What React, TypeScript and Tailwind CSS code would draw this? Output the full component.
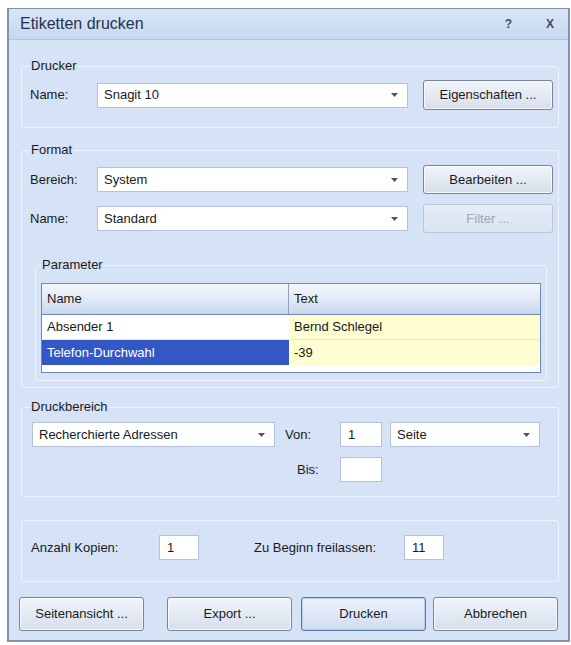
import type { ReactNode } from "react";

const ui = "font-['Liberation_Sans',Arial,sans-serif]";

// small grey dropdown caret used by the combo boxes
const Caret = () => (
  <svg width="7" height="4" viewBox="0 0 7 4" className="shrink-0">
    <path d="M0 0h7L3.5 4z" fill="#4b5565" />
  </svg>
);

const Combo = ({ value, className = "" }: { value: string; className?: string }) => (
  <div
    className={`flex h-[25px] items-center justify-between border border-[#b4c3db] bg-white pl-[6px] pr-[9px] text-[13px] text-[#1a1a1a] ${className}`}
  >
    <span>{value}</span>
    <Caret />
  </div>
);

const Field = ({ value = "", className = "" }: { value?: string; className?: string }) => (
  <div
    className={`flex h-[25px] items-center border border-[#b4c3db] bg-white pl-[7px] text-[13px] text-[#1a1a1a] ${className}`}
  >
    {value}
  </div>
);

type BtnProps = { children: ReactNode; className?: string; primary?: boolean; disabled?: boolean };

const Btn = ({ children, className = "", primary, disabled }: BtnProps) => {
  let look =
    "border-[#76859f] bg-gradient-to-b from-[#f2f5fa] via-[#e4eaf3] to-[#d6dfec] text-[#1a1a1a] shadow-[inset_0_0_0_1px_#f7f9fc]";
  if (primary)
    look =
      "border-[#5a78ad] bg-gradient-to-b from-[#eef3fb] via-[#dfe8f6] to-[#cfdcef] text-[#1a1a1a] shadow-[inset_0_0_0_1px_#b9cdea]";
  if (disabled)
    look = "border-[#b9c7dc] bg-gradient-to-b from-[#e6edf7] to-[#d9e3f1] text-[#9aa6b8]";
  return (
    <div
      className={`flex items-center justify-center rounded-[3px] border text-[13px] ${look} ${className}`}
    >
      {children}
    </div>
  );
};

const Group = ({
  title,
  className = "",
  children,
}: {
  title?: string;
  className?: string;
  children: ReactNode;
}) => (
  <fieldset className={`rounded-[3px] border border-[#eef3fb] ${className}`}>
    {title && (
      <legend className="px-[1px] text-[13px] leading-[16px] text-[#1a1a1a]">{title}</legend>
    )}
    {children}
  </fieldset>
);

const Label = ({ children, className = "" }: { children: ReactNode; className?: string }) => (
  <span className={`text-[13px] text-[#1a1a1a] ${className}`}>{children}</span>
);

export default function App() {
  return (
    <div className={`min-h-screen bg-white pl-[7px] pt-[8px] ${ui}`}>
      <div className="w-[563px] border-2 border-t border-[#8392ab] bg-[#d6e2f5]">
        {/* title bar */}
        <div className="flex h-[31px] items-center justify-between border-b border-[#b3c4dd] bg-gradient-to-b from-[#d9e6f7] to-[#c6d8f0] pl-[11px] pr-[14px]">
          <span className="text-[16px] text-[#27344d]">Etiketten drucken</span>
          <div className="flex items-center gap-[34px] text-[12px] font-bold text-[#3d4b66]">
            <span>?</span>
            <span>X</span>
          </div>
        </div>

        <div className="pb-[9px] pl-[12px] pr-[9px] pt-[18px]">
          <Group title="Drucker" className="pb-[17px] pl-[8px] pr-[4px]">
            <div className="mt-[6px] flex h-[30px] items-center">
              <Label className="w-[67px]">Name:</Label>
              <Combo value="Snagit 10" className="w-[311px]" />
              <Btn className="ml-[15px] h-[30px] w-[130px]">Eigenschaften ...</Btn>
            </div>
          </Group>

          <Group title="Format" className="mt-[14px] pb-[6px] pl-[8px] pr-[4px]">
            <div className="mt-[7px] flex flex-col gap-[10px]">
              <div className="flex h-[29px] items-center">
                <Label className="w-[67px]">Bereich:</Label>
                <Combo value="System" className="w-[311px]" />
                <Btn className="ml-[15px] h-[29px] w-[130px]">Bearbeiten ...</Btn>
              </div>
              <div className="flex h-[29px] items-center">
                <Label className="w-[67px]">Name:</Label>
                <Combo value="Standard" className="w-[311px]" />
                <Btn disabled className="ml-[15px] h-[29px] w-[130px]">
                  Filter ...
                </Btn>
              </div>
            </div>

            <Group title="Parameter" className="ml-[5px] mr-[7px] mt-[24px] px-[5px] pb-[7px]">
              <div className="mt-[10px] border border-[#6f86b6] bg-white text-[13px] text-[#1a1a1a]">
                <div className="grid h-[31px] grid-cols-[247px_1fr] border-b border-[#6f86b6] bg-gradient-to-b from-[#f4f7fc] via-[#e2eaf6] to-[#c8d6ee]">
                  <div className="flex items-center border-r border-[#8ea2c8] pl-[5px]">Name</div>
                  <div className="flex items-center pl-[5px]">Text</div>
                </div>
                <div className="grid h-[25px] grid-cols-[247px_1fr] border-b border-[#e3e6ea]">
                  <div className="flex items-center pl-[5px]">Absender 1</div>
                  <div className="flex items-center bg-[#fdfdd1] pl-[5px]">Bernd Schlegel</div>
                </div>
                <div className="grid h-[25px] grid-cols-[247px_1fr]">
                  <div className="flex items-center bg-[#3457c6] pl-[5px] text-white">
                    Telefon-Durchwahl
                  </div>
                  <div className="flex items-center bg-[#fdfdd1] pl-[5px]">-39</div>
                </div>
                <div className="h-[7px]" />
              </div>
            </Group>
          </Group>

          <Group title="Druckbereich" className="mt-[11px] pb-[14px] pl-[8px] pr-[4px]">
            <div className="mt-[7px] flex flex-col gap-[10px] pl-[2px]">
              <div className="flex h-[25px] items-center">
                <Combo value="Recherchierte Adressen" className="w-[243px]" />
                <Label className="w-[65px] pl-[10px]">Von:</Label>
                <Field value="1" className="w-[42px]" />
                <Combo value="Seite" className="ml-[8px] w-[150px]" />
              </div>
              <div className="flex h-[25px] items-center">
                <Label className="ml-[243px] w-[65px] pl-[22px]">Bis:</Label>
                <Field className="w-[42px]" />
              </div>
            </div>
          </Group>

          <Group className="mt-[23px] pb-[21px] pl-[9px] pt-[14px]">
            <div className="flex h-[25px] items-center">
              <Label className="w-[128px]">Anzahl Kopien:</Label>
              <Field value="1" className="w-[40px]" />
              <Label className="ml-[55px] w-[150px]">Zu Beginn freilassen:</Label>
              <Field value="11" className="w-[40px]" />
            </div>
          </Group>

          <div className="-ml-[2px] mt-[15px] flex h-[34px]">
            <Btn className="w-[125px]">Seitenansicht ...</Btn>
            <Btn className="ml-[23px] w-[125px]">Export ...</Btn>
            <Btn primary className="ml-[9px] w-[125px]">
              Drucken
            </Btn>
            <Btn className="ml-[7px] w-[125px]">Abbrechen</Btn>
          </div>
        </div>
      </div>
    </div>
  );
}
